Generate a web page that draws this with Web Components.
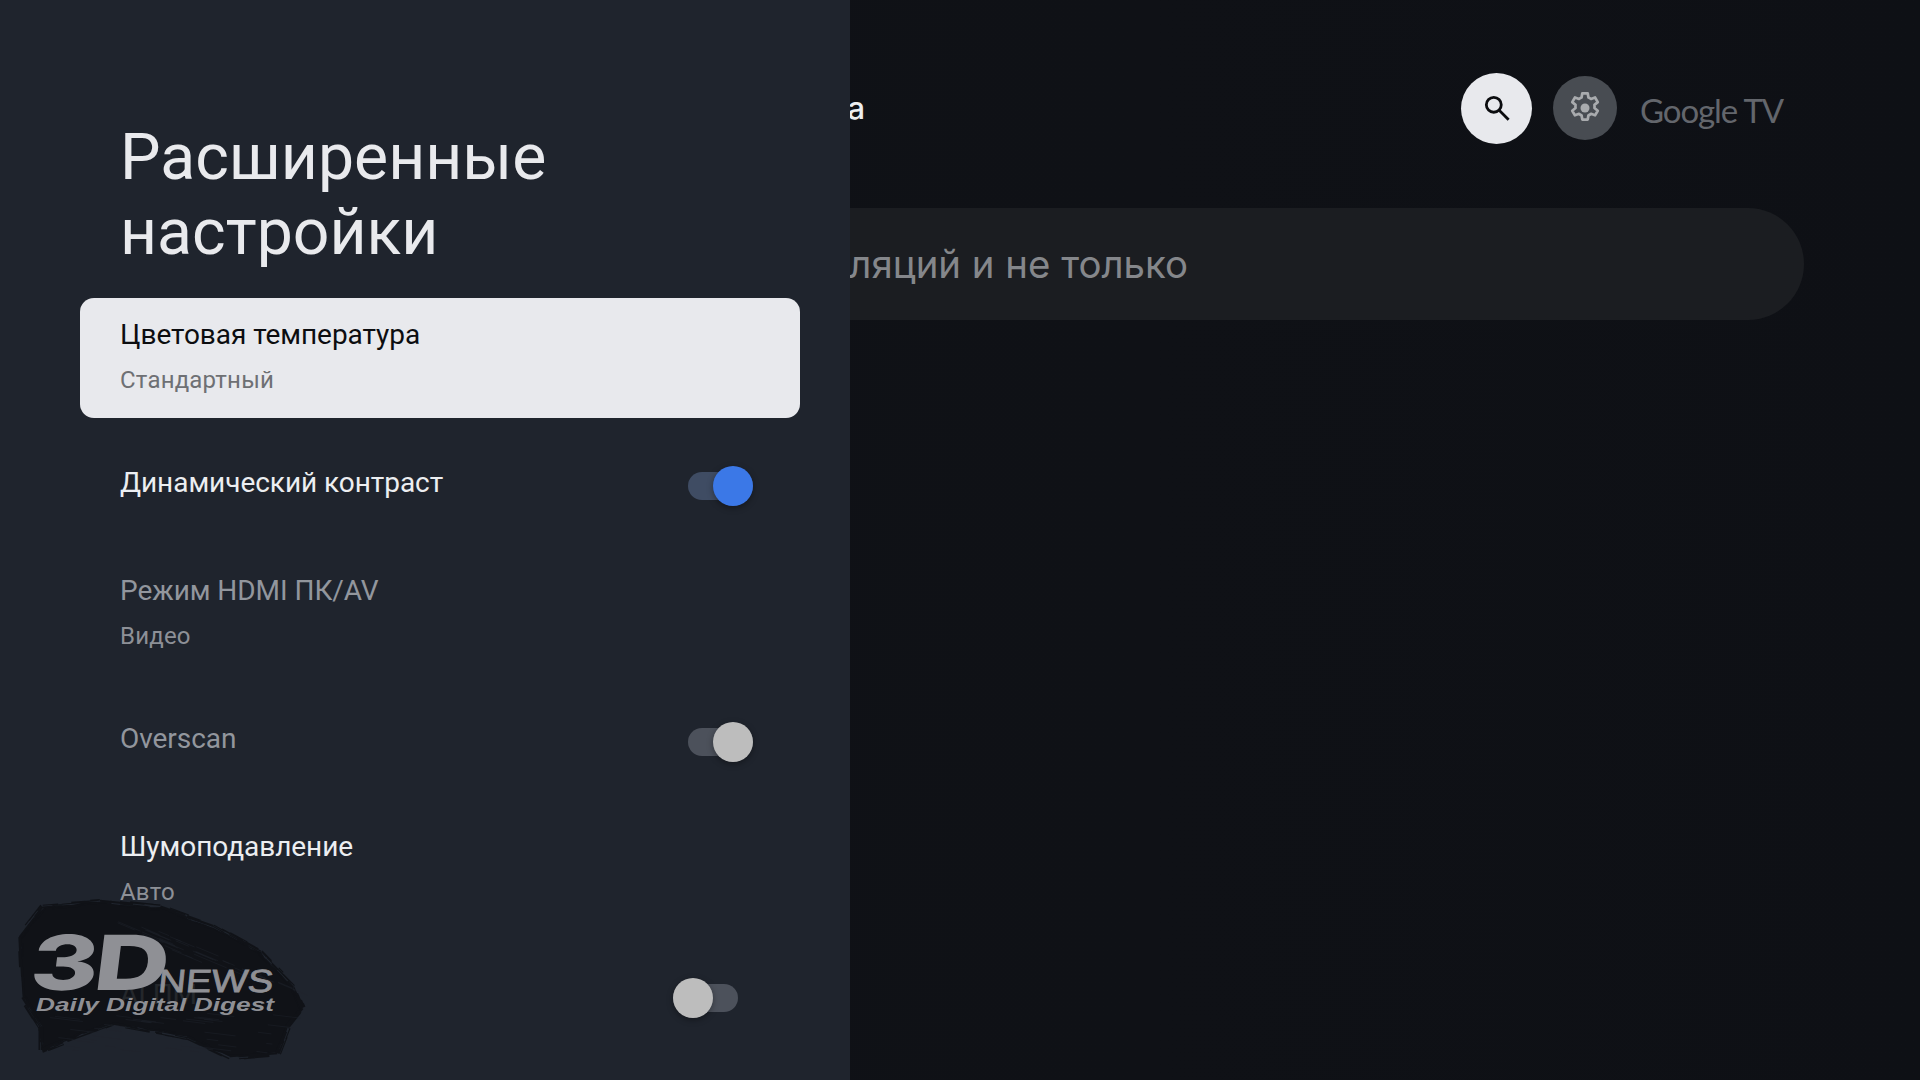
<!DOCTYPE html>
<html lang="ru"><head><meta charset="utf-8"><title>Расширенные настройки</title>
<style>
html,body{margin:0;height:100%;background:#0f1116}
body{width:1920px;height:1080px;overflow:hidden;font-family:Roboto,"Noto Sans",sans-serif}
</style></head><body>
<tv-screen>
  <tv-home></tv-home>
  <settings-panel heading="Расширенные настройки">
    <setting-row focused label="Цветовая температура" sub="Стандартный"></setting-row>
    <setting-row label="Динамический контраст" toggle="on-blue"></setting-row>
    <setting-row dim label="Режим HDMI ПК/AV" sub="Видео"></setting-row>
    <setting-row dim label="Overscan" toggle="on-grey"></setting-row>
    <setting-row label="Шумоподавление" sub="Авто"></setting-row>
    <setting-row dim label="AI ПМ" toggle="off"></setting-row>
  </settings-panel>
  <news-mark></news-mark>
</tv-screen>
<script>
function def(name,html,init){customElements.define(name,class extends HTMLElement{
  constructor(){super();this.attachShadow({mode:'open'}).innerHTML=html;}
  connectedCallback(){if(init)init(this);}
});}
def('tv-screen',`<style>:host{display:block;position:relative;width:1920px;height:1080px;overflow:hidden;background:#0f1116}</style><slot></slot>`);
def('tv-home',`<style>
:host{display:flex;flex-direction:column;height:100%;box-sizing:border-box;padding:72px 116px 0 0;align-items:stretch;
 background:linear-gradient(90deg,#101216 0,#0f1116 60%,#0e1015 100%)}
.top{display:flex;align-items:center;height:72px;padding-right:21px}
.tab{font:500 31px Inter,Roboto,sans-serif;color:#eceef1;width:865px;text-align:right;flex:none;line-height:72px}
.sp{flex:1}
.search{width:71px;height:71px;border-radius:50%;background:#e8e9ed;display:flex;align-items:center;justify-content:center}
.gear{width:64px;height:64px;border-radius:50%;background:#484c52;display:flex;align-items:center;justify-content:center;margin-left:21px}
.gtv{margin-left:23px;font:400 33px/40px Lato,"Open Sans",sans-serif;color:#63666c;letter-spacing:-1.1px;white-space:nowrap;width:143px;padding-top:4px}
.bar{margin-top:64px;height:112px;border-radius:56px;background:#1b1d21;display:flex;align-items:center;font:400 38.4px Inter,Roboto,sans-serif;color:#85878b;white-space:nowrap;overflow:hidden}
.bar span{display:block;width:1188px;flex:none;text-align:right}
</style>
<div class="top"><div class="tab">Библиотека</div><div class="sp"></div>
<div class="search"><svg width="32" height="32" viewBox="0 0 24 24" fill="none" stroke="#0b0c0f" stroke-width="2.1"><circle cx="9.6" cy="9.6" r="5.6"/><path d="M13.8 13.8 20 20" stroke-linecap="square"/></svg></div>
<div class="gear"><svg width="36" height="36" viewBox="0 0 24 24"><path fill="none" stroke="#a9abae" stroke-width="1.8" stroke-linejoin="round" d="M10.2 2.2h3.6l.5 2.8c.6.2 1.2.6 1.7 1l2.7-1 1.8 3.1-2.2 1.8c.1.7.1 1.4 0 2.1l2.2 1.8-1.8 3.1-2.7-1c-.5.4-1.1.8-1.7 1l-.5 2.8h-3.6l-.5-2.8c-.6-.2-1.2-.6-1.7-1l-2.7 1-1.8-3.1 2.2-1.8c-.1-.7-.1-1.4 0-2.1L3.5 8.1l1.8-3.1 2.7 1c.5-.4 1.1-.8 1.7-1z"/><circle cx="12" cy="12" r="3" fill="#a9abae"/></svg></div>
<div class="gtv">Google TV</div></div>
<div class="bar"><span>трансляций и не только</span></div>`);
def('settings-panel',`<style>
:host{position:absolute;left:0;top:0;width:850px;height:1080px;background:#1f242d;box-sizing:border-box;padding:0 50px 0 80px;overflow:hidden;display:block}
h1{margin:0;padding:120px 60px 0 40px;height:178px;font:400 64.3px/75px Roboto,sans-serif;color:#e9eaed}
.list{display:flex;flex-direction:column;gap:8px}
</style><h1></h1><div class="list"><slot></slot></div>`,el=>{el.shadowRoot.querySelector('h1').textContent=el.getAttribute('heading')});
def('setting-row',`<style>
:host{display:flex;height:120px;box-sizing:border-box;padding:0 47px 0 40px;border-radius:14px;color:#eceef1;align-items:center;flex:none}
:host([focused]){background:#e8e9ed;color:#0c0d10}
:host([dim]){color:#92969d}
.t{flex:1;min-width:0;padding-bottom:6px}
.l{font:400 28px/30px Roboto,sans-serif;letter-spacing:-.05px}
.s{font:400 24px/28px Roboto,sans-serif;color:#8d9097;margin-top:16px;letter-spacing:.2px}
:host(:not([sub])) .s{display:none}
:host([sub]) .t{padding-bottom:3px}
:host([focused]) .s{color:#6e7074}
.sw{display:none;position:relative;width:65px;height:28px;margin-left:16px}
.sw i{position:absolute;left:0;right:0;top:0;bottom:0;border-radius:14px;background:#3f4c63}
.sw b{position:absolute;right:0;top:-6px;width:40px;height:40px;border-radius:50%;background:#3b78e7;box-shadow:0 2px 6px rgba(0,0,0,.35)}
:host([toggle]) .sw{display:block}
:host([toggle=on-grey]) .sw b{background:#bdbdbd}
:host([toggle=on-grey]) .sw i{background:#4c515b}
:host([toggle=off]) .sw{transform:translateX(-15px)}
:host([toggle=off]) .sw b{right:auto;left:0;background:#bdbdbd}
:host([toggle=off]) .sw i{background:#4c515b}
</style><div class="t"><div class="l"></div><div class="s"></div></div><div class="sw"><i></i><b></b></div>`,el=>{
 const r=el.shadowRoot;r.querySelector('.l').textContent=el.getAttribute('label');r.querySelector('.s').textContent=el.getAttribute('sub')||'';});
def('news-mark',`<style>
:host{position:absolute;left:0;top:880px;width:340px;height:200px;display:block;pointer-events:none}
svg{position:absolute;left:0;top:0}
div{position:absolute;color:#8f9095;white-space:nowrap;transform-origin:0 0}
.d{left:36px;top:44px;font:800 76px/76px Inter,sans-serif;transform:skewX(-7deg) scale(1.36,1);letter-spacing:-3px}
.n{left:160px;top:85px;font:400 32px/32px "Liberation Sans",sans-serif;-webkit-text-stroke:.8px #8f9095;transform:skewX(-6deg) scale(1.2,1)}
.g{left:36px;top:115px;font:italic 700 18px/20px "Liberation Sans",sans-serif;transform:scale(1.46,1)}
</style><svg width="340" height="200" viewBox="0 0 340 200"></svg><div class="d">3D</div><div class="n">NEWS</div><div class="g">Daily Digital Digest</div>`,el=>{
 const pts=[[20,57],[43,27],[100,22],[160,28],[213,47],[260,73],[293,107],[302,128],[287,147],[277,173],[230,177],[187,157],[113,143],[67,160],[42,170],[42,147],[23,117]];
 let s=11;const R=()=>(s=(s*16807)%2147483647)/2147483647;
 const ring=[];let hairs='',cuts='';
 pts.forEach((p,i)=>{const q=pts[(i+1)%pts.length];const n=6;for(let k=0;k<n;k++){const t=k/n;
   const x=p[0]+(q[0]-p[0])*t,y=p[1]+(q[1]-p[1])*t;ring.push([x+(R()-.5)*2.5,y+(R()-.5)*2.5]);
   const dx=q[0]-p[0],dy=q[1]-p[1],L=Math.hypot(dx,dy)||1,rem=L*(1-t);
   for(let h=0;h<3;h++){const l=Math.min(6+R()*22,rem),o=-R()*4+R()*3;hairs+=`M${(x-dy/L*o).toFixed(1)} ${(y+dx/L*o).toFixed(1)}l${(dx/L*l).toFixed(1)} ${(dy/L*l).toFixed(1)}`;}
 }});
 for(let i=0;i<70;i++){const b=R()<.55;const x=b?45+R()*230:110+R()*170,y=b?132+R()*40:30+(x-110)*.42+R()*14,l=6+R()*28;cuts+=`M${x.toFixed(1)} ${y.toFixed(1)}l${l.toFixed(1)} ${(l*(b?.12:.42)).toFixed(1)}`;}
 const d='M'+ring.map(p=>p[0].toFixed(1)+' '+p[1].toFixed(1)).join('L')+'Z';
 el.shadowRoot.querySelector('svg').innerHTML=`<g opacity=".82"><path d="${d}" fill="#0d0f13"/><path d="${hairs}" stroke="#0d0f13" stroke-width="1.1" fill="none"/></g><path d="${cuts}" stroke="#1f242d" stroke-width="1" opacity=".45" fill="none"/>`;
});
</script>
</body></html>
